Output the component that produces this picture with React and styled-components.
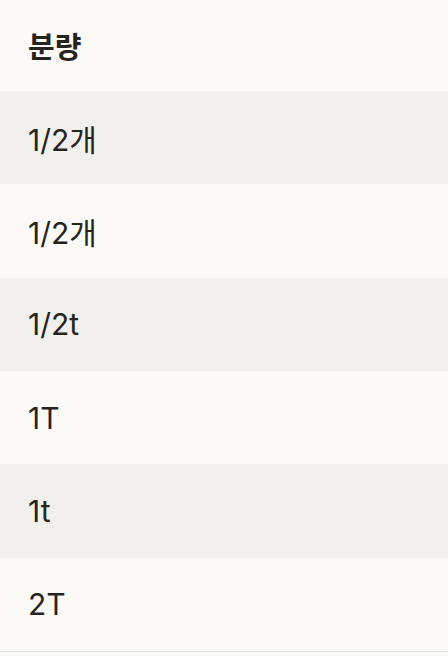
import React from 'react';
import styled, { createGlobalStyle } from 'styled-components';

const rows = ['1/2개', '1/2개', '1/2t', '1T', '1t', '2T'];

const GlobalStyle = createGlobalStyle`
  html, body {
    margin: 0;
    padding: 0;
    background: #fbfaf6;
  }
`;

const Table = styled.div`
  display: flex;
  flex-direction: column;
  width: 448px;
  font-family: Inter, "Noto Sans CJK KR", sans-serif;
  color: #26241f;
  border-bottom: 1px solid #e3e1dc;
`;

const HeaderCell = styled.div`
  display: flex;
  align-items: center;
  height: 89px;
  padding: 0 28px 2px;
  font-size: 29px;
  font-weight: 700;
  background: #fbfaf6;
`;

const Row = styled.div`
  display: flex;
  align-items: center;
  height: 93.33px;
  padding: 0 28px;
  font-size: 30px;
  font-weight: 400;
  background: ${props => (props.striped ? '#f1f0ec' : '#fbfaf6')};
`;

const App = () => (
  <>
    <GlobalStyle />
    <Table>
      <HeaderCell>분량</HeaderCell>
      {rows.map((text, index) => (
        <Row key={index} striped={index % 2 === 0}>{text}</Row>
      ))}
    </Table>
  </>
);

export default App;
